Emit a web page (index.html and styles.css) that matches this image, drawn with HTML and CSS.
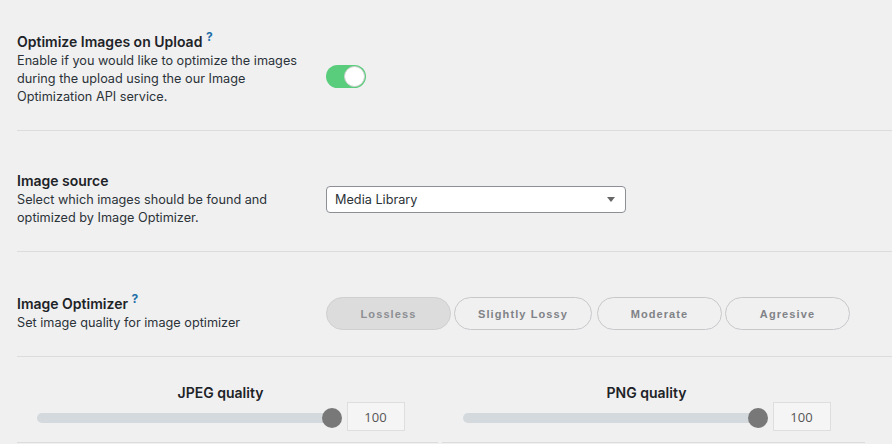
FILE: index.html
```html
<!DOCTYPE html>
<html lang="en">
<head>
<meta charset="utf-8">
<title>Image Optimizer Settings</title>
<link rel="stylesheet" href="styles.css">
</head>
<body>
<div class="settings">
  <section class="setting setting-upload">
    <div class="label">
      <h3 class="title">Optimize Images on Upload <sup class="help">?</sup></h3>
      <p class="desc">Enable if you would like to optimize the images during the upload using the our Image Optimization API service.</p>
    </div>
    <div class="control control-toggle">
      <span class="toggle"><span class="knob"></span></span>
    </div>
  </section>

  <section class="setting setting-source">
    <div class="label">
      <h3 class="title">Image source</h3>
      <p class="desc">Select which images should be found and optimized by Image Optimizer.</p>
    </div>
    <div class="control">
      <div class="select"><span>Media Library</span><span class="caret"></span></div>
    </div>
  </section>

  <section class="setting setting-level">
    <div class="label">
      <h3 class="title">Image Optimizer <sup class="help">?</sup></h3>
      <p class="desc">Set image quality for image optimizer</p>
    </div>
    <div class="control levels">
      <span class="level active">Lossless</span>
      <span class="level level-wide">Slightly Lossy</span>
      <span class="level">Moderate</span>
      <span class="level">Agresive</span>
    </div>
  </section>

  <div class="qualities">
    <div class="quality">
      <h4 class="q-title">JPEG quality</h4>
      <div class="q-row">
        <div class="track"><span class="thumb"></span></div>
        <div class="q-value">100</div>
      </div>
    </div>
    <div class="quality">
      <h4 class="q-title">PNG quality</h4>
      <div class="q-row">
        <div class="track"><span class="thumb"></span></div>
        <div class="q-value">100</div>
      </div>
    </div>
  </div>
</div>
</body>
</html>
```
FILE: styles.css
```css
html, body {
  margin: 0;
  padding: 0;
  background: #f0f0f1;
}
body {
  font-family: Inter, "Liberation Sans", Arial, sans-serif;
  color: #2c3338;
  width: 892px;
  height: 444px;
  overflow: hidden;
}
.settings {
  margin-left: 17px;
}
.setting {
  display: flex;
  align-items: center;
  border-bottom: 1px solid #dcdcde;
  padding: 41px 0 24px 0;
}
.setting-upload {
  padding-top: 33px;
}
.setting-level {
  padding-top: 43px;
}
.label {
  flex: 0 0 309px;
  box-sizing: border-box;
  padding-right: 12px;
}
.title {
  margin: 0;
  font-size: 14px;
  line-height: 18px;
  font-weight: 600;
  color: #1d2327;
}
.help {
  font-size: 12px;
  line-height: 0;
  color: #1f6fa8;
  vertical-align: 6px;
  font-weight: 700;
}
.desc {
  margin: 1px 0 0 0;
  font-size: 12.7px;
  line-height: 18px;
}
.control-toggle {
  align-self: flex-start;
  margin-top: 32px;
}
.toggle {
  display: flex;
  justify-content: flex-end;
  align-items: center;
  width: 40px;
  height: 23px;
  box-sizing: border-box;
  border-radius: 12px;
  background: #5acd7d;
  padding: 1px;
}
.knob {
  width: 21px;
  height: 21px;
  box-sizing: border-box;
  border-radius: 50%;
  background: #ffffff;
  border: 1px solid #cfcfcf;
}
.select {
  width: 300px;
  height: 27px;
  box-sizing: border-box;
  border: 1px solid #8c8f94;
  border-radius: 4px;
  background: #fff;
  display: flex;
  align-items: center;
  justify-content: space-between;
  padding: 0 10px 0 8px;
  font-size: 12.7px;
  color: #2c3338;
}
.caret {
  width: 0;
  height: 0;
  border-left: 4px solid transparent;
  border-right: 4px solid transparent;
  border-top: 5px solid #666;
}
.levels {
  display: flex;
  gap: 3px;
}
.level {
  display: flex;
  align-items: center;
  justify-content: center;
  min-width: 125px;
  height: 33px;
  box-sizing: border-box;
  padding: 0 23px;
  border: 1px solid #c8c8cb;
  border-radius: 17px;
  font-family: "Liberation Sans", Arial, sans-serif;
  font-size: 11px;
  font-weight: 700;
  letter-spacing: 1.1px;
  color: #808286;
}
.level-wide {
  margin-right: 2px;
}
.level.active {
  background: #dcdcdd;
  color: #8c8e92;
  border-color: #cfcfd1;
}
.qualities {
  display: grid;
  grid-template-columns: 421px 423px;
  gap: 4px;
}
.quality {
  border-bottom: 1px solid #dcdcde;
  padding: 27px 14px 11px 0;
  display: flex;
  flex-direction: column;
  align-items: center;
}
.q-title {
  margin: 0;
  font-size: 14px;
  line-height: 18px;
  font-weight: 600;
  color: #1d2327;
}
.q-row {
  display: flex;
  align-items: center;
  gap: 15px;
}
.track {
  position: relative;
  width: 295px;
  height: 10px;
  border-radius: 5px;
  background: #d4d9dd;
  margin-top: 2px;
}
.thumb {
  position: absolute;
  right: -10px;
  top: -5px;
  width: 20px;
  height: 20px;
  border-radius: 50%;
  background: #787878;
}
.q-value {
  width: 58px;
  height: 29px;
  box-sizing: border-box;
  border: 1px solid #dedede;
  background: #f5f5f5;
  display: flex;
  align-items: center;
  justify-content: center;
  font-family: "Open Sans", "Liberation Sans", sans-serif;
  font-size: 13px;
  color: #555;
}
```
